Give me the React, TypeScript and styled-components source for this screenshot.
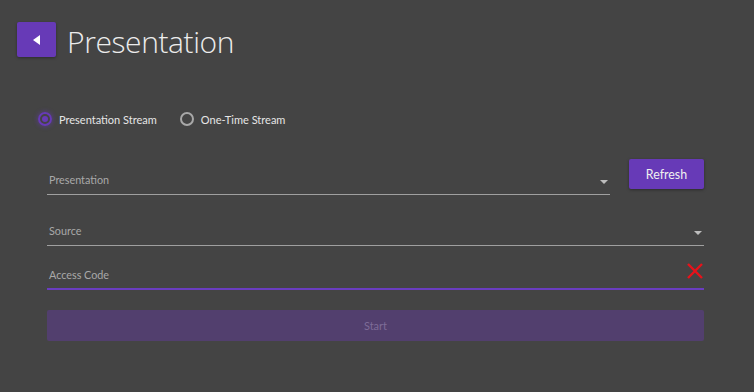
import React from "react";
import styled, { createGlobalStyle } from "styled-components";

const Global = createGlobalStyle`
  html, body { margin: 0; padding: 0; background: #444444; }
  body { font-family: "Lato", "Open Sans", sans-serif; }
  #root { width: 754px; height: 392px; }
`;

const Page = styled.div`
  width: 754px;
  height: 392px;
  box-sizing: border-box;
  background: #444444;
  padding: 22px 50px 0 17px;
  display: flex;
  flex-direction: column;
`;

const Header = styled.div`
  display: flex;
  align-items: center;
  gap: 11px;
  height: 35px;
`;

const BackButton = styled.button`
  width: 39px;
  height: 35px;
  border: none;
  border-radius: 2px;
  background: #673ab7;
  box-shadow: 0 1px 3px rgba(0, 0, 0, 0.35);
  display: flex;
  align-items: center;
  justify-content: center;
  padding: 0;
`;

const Title = styled.h1`
  margin: 0;
  padding-top: 3px;
  font-family: "Open Sans", sans-serif;
  font-weight: 300;
  font-size: 30px;
  color: #ececec;
  letter-spacing: -0.4px;
  line-height: 35px;
`;

const Form = styled.div`
  padding-left: 30px;
  display: flex;
  flex-direction: column;
  margin-top: 52px;
`;

const RadioRow = styled.div`
  display: flex;
  align-items: center;
  gap: 23px;
  margin-left: -9px;
  height: 20px;
`;

const RadioItem = styled.label`
  display: flex;
  align-items: center;
  gap: 7px;
  font-size: 11px;
  color: #e6e6e6;
`;

const RadioCircle = styled.span<{ $checked?: boolean }>`
  width: 14px;
  height: 14px;
  box-sizing: border-box;
  border-radius: 50%;
  border: 2px solid ${(p) => (p.$checked ? "#673ab7" : "#a8a8a8")};
  display: flex;
  align-items: center;
  justify-content: center;
  box-shadow: ${(p) => (p.$checked ? "0 0 4px 1px rgba(103,58,183,0.45)" : "none")};
  &::after {
    content: "";
    display: ${(p) => (p.$checked ? "block" : "none")};
    width: 6px;
    height: 6px;
    border-radius: 50%;
    background: #673ab7;
  }
`;

const FieldRow = styled.div<{ $top: number }>`
  display: flex;
  align-items: flex-end;
  gap: 19px;
  margin-top: ${(p) => p.$top}px;
`;

const Field = styled.div<{ $line: string; $thick?: boolean }>`
  flex: 1;
  height: 29px;
  box-sizing: border-box;
  border-bottom: ${(p) => (p.$thick ? 2 : 1)}px solid ${(p) => p.$line};
  display: flex;
  align-items: center;
  justify-content: space-between;
  padding: 0 2px ${(p) => (p.$thick ? 0 : 1)}px 2px;
  position: relative;
`;

const Label = styled.span`
  font-size: 10.8px;
  color: #a9a9a9;
`;

const Caret = styled.span`
  width: 0;
  height: 0;
  border-left: 4px solid transparent;
  border-right: 4px solid transparent;
  border-top: 4px solid #bdbdbd;
  margin-top: 4px;
`;

const ClearIcon = styled.svg`
  position: absolute;
  right: 0;
  top: 1px;
`;

const RefreshButton = styled.button`
  width: 75px;
  height: 30px;
  border: none;
  border-radius: 2px;
  background: #673ab7;
  color: #f0f0f0;
  font-family: "Lato", sans-serif;
  font-size: 12.4px;
  margin-bottom: 6px;
  box-shadow: 0 1px 3px rgba(0, 0, 0, 0.35);
  padding: 0;
`;

const StartButton = styled.button`
  margin-top: 20px;
  height: 31px;
  width: 100%;
  border: none;
  border-radius: 2px;
  background: #523f6e;
  color: #7e6c98;
  font-family: "Lato", sans-serif;
  font-size: 11px;
  padding: 0;
`;

export default function App() {
  return (
    <>
      <Global />
      <Page>
        <Header>
          <BackButton aria-label="Back">
            <svg width="7" height="10" viewBox="0 0 7 10">
              <polygon points="7,0 7,10 0,5" fill="#ffffff" />
            </svg>
          </BackButton>
          <Title>Presentation</Title>
        </Header>
        <Form>
          <RadioRow>
            <RadioItem>
              <RadioCircle $checked />
              Presentation Stream
            </RadioItem>
            <RadioItem>
              <RadioCircle />
              One-Time Stream
            </RadioItem>
          </RadioRow>
          <FieldRow $top={30}>
            <Field $line="#a0a0a0">
              <Label>Presentation</Label>
              <Caret />
            </Field>
            <RefreshButton>Refresh</RefreshButton>
          </FieldRow>
          <FieldRow $top={22}>
            <Field $line="#a0a0a0">
              <Label>Source</Label>
              <Caret />
            </Field>
          </FieldRow>
          <FieldRow $top={15}>
            <Field $line="#6a3dc0" $thick>
              <Label>Access Code</Label>
              <ClearIcon width="18" height="18" viewBox="0 0 18 18">
                <path d="M2 2 L16 16 M16 2 L2 16" stroke="#e8121a" strokeWidth="2.4" fill="none" />
              </ClearIcon>
            </Field>
          </FieldRow>
          <StartButton disabled>Start</StartButton>
        </Form>
      </Page>
    </>
  );
}
